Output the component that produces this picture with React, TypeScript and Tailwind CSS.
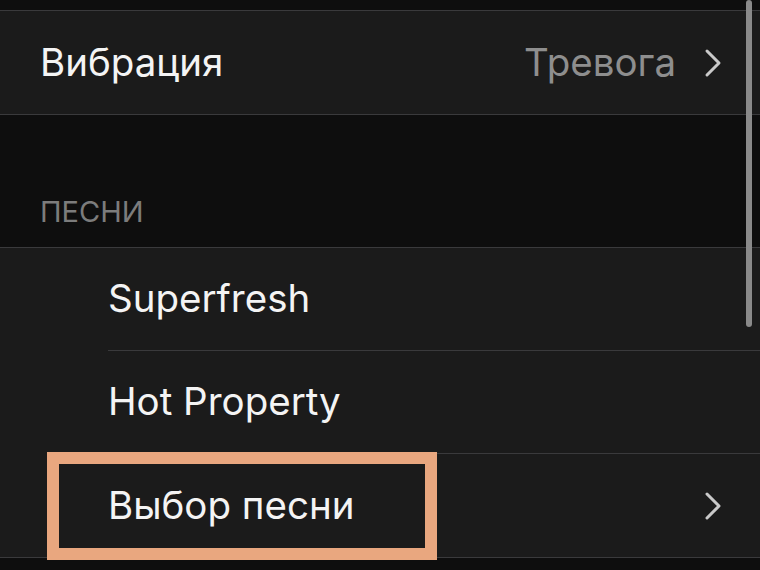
import React from "react";

const Chevron = () => (
  <svg width="18" height="30" viewBox="0 0 18 30" fill="none" className="shrink-0">
    <polyline points="3,3 15,15 3,27" stroke="#c9c9c9" strokeWidth="3" strokeLinecap="round" strokeLinejoin="round" />
  </svg>
);

export default function App() {
  const songs = ["Superfresh", "Hot Property"];

  return (
    <div
      className="relative w-[760px] h-[570px] overflow-hidden bg-[#0e0e0e] text-[#f4f4f4]"
      style={{ fontFamily: "Inter, 'Noto Sans', sans-serif" }}
    >
      {/* top gap */}
      <div className="h-[10px]" />

      {/* Vibration row */}
      <div className="h-[105px] border-y border-[#3a3a3c] bg-[#1b1b1b] flex items-center justify-between pl-[40px] pr-[38px]">
        <span className="text-[38.5px]">Вибрация</span>
        <div className="flex items-center gap-[28px]">
          <span className="text-[38.5px] text-[#8e8e8e]">Тревога</span>
          <Chevron />
        </div>
      </div>

      {/* Section header */}
      <div className="h-[132px] flex items-end pb-[14px] pl-[40px]">
        <span className="text-[29px] text-[#7c7c7c]">ПЕСНИ</span>
      </div>

      {/* Songs group */}
      <div className="border-y border-[#3a3a3c] bg-[#1b1b1b]">
        {songs.map((s) => (
          <div key={s} className="pl-[108px]">
            <div className="h-[103px] border-b border-[#3a3a3c] flex items-center">
              <span className="text-[38.5px]">{s}</span>
            </div>
          </div>
        ))}
        <div className="h-[103px] flex items-center justify-between pl-[108px] pr-[38px]">
          <span className="text-[38.5px]">Выбор песни</span>
          <Chevron />
        </div>
      </div>

      {/* scroll indicator */}
      <div className="absolute right-[8px] top-0 w-[6px] h-[327px] rounded-full bg-[#8a8a8a]" />

      {/* highlight annotation */}
      <div className="absolute left-[47px] top-[452px] w-[390px] h-[108px] border-[12px] border-[#e9a77f]" />
    </div>
  );
}
